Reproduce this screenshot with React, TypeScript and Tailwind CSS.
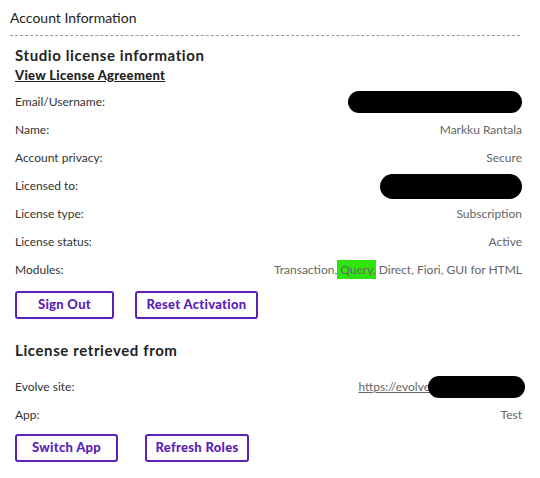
import React from 'react';

const font = { fontFamily: 'Lato, "Open Sans", sans-serif' };

type Row = { label: string; value?: React.ReactNode };

function Redacted({ w, h }: { w: number; h: number }) {
  return (
    <span
      className="inline-block bg-black rounded-full align-middle"
      style={{ width: w, height: h }}
    />
  );
}

function InfoRow({ label, value }: Row) {
  return (
    <div className="flex h-[28px] items-center justify-between text-[12px]">
      <span className="text-[#333]">{label}</span>
      <span className="text-[#666]">{value}</span>
    </div>
  );
}

function OutlineButton({ label, w }: { label: string; w: string }) {
  return (
    <button
      className={`${w} h-[28px] rounded-[3px] border-2 border-[#5b21b6] text-[13px] font-black tracking-[0.3px] text-[#5b21b6]`}
    >
      {label}
    </button>
  );
}

export default function App() {
  return (
    <div className="w-[540px] h-[478px] bg-white pl-[10px] pr-[20px] pt-[8px]" style={font}>
      <div className="h-[28px] border-b border-dashed border-[#999]">
        <div className="h-[20px] text-[14px] leading-[20px] text-[#222]">Account Information</div>
      </div>

      <div className="pl-[5px]">
        <h2 className="mt-[10px] h-[18px] text-[15px] leading-[18px] font-bold tracking-[0.6px] text-[#222]">
          Studio license information
        </h2>
        <a className="mt-[4px] block h-[14px] text-[13px] leading-[14px] font-black tracking-[0.3px] text-[#222] underline">
          View License Agreement
        </a>

        <div className="mt-[6px] -mr-[2px]">
          <InfoRow label="Email/Username:" value={<Redacted w={174} h={22} />} />
          <InfoRow label="Name:" value="Markku Rantala" />
          <InfoRow label="Account privacy:" value="Secure" />
          <InfoRow label="Licensed to:" value={<Redacted w={142} h={25} />} />
          <InfoRow label="License type:" value="Subscription" />
          <InfoRow label="License status:" value="Active" />
          <InfoRow
            label="Modules:"
            value={
              <>
                Transaction,<span className="bg-[#2ee60c] py-[2px]"> Query,</span> Direct, Fiori, GUI for HTML
              </>
            }
          />
        </div>

        <div className="mt-[7px] flex gap-[21px]">
          <OutlineButton label="Sign Out" w="w-[99px]" />
          <OutlineButton label="Reset Activation" w="w-[123px]" />
        </div>

        <h2 className="mt-[22px] h-[18px] text-[15px] leading-[18px] font-bold tracking-[0.6px] text-[#222]">
          License retrieved from
        </h2>

        <div className="mt-[14px] -mr-[2px]">
          <InfoRow
            label="Evolve site:"
            value={
              <span className="flex items-center">
                <span className="underline">https://evolve</span>
                <span className="-ml-[2px] -mr-[3px]">
                  <Redacted w={97} h={22} />
                </span>
              </span>
            }
          />
          <InfoRow label="App:" value="Test" />
        </div>

        <div className="mt-[5px] flex gap-[27px]">
          <OutlineButton label="Switch App" w="w-[103px]" />
          <OutlineButton label="Refresh Roles" w="w-[104px]" />
        </div>
      </div>
    </div>
  );
}
